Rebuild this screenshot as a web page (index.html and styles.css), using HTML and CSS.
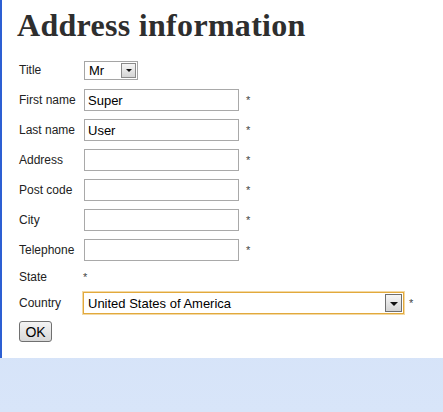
FILE: index.html
```html
<!DOCTYPE html>
<html lang="en">
<head>
    <meta charset="UTF-8">
    <meta name="viewport" content="width=device-width, initial-scale=1.0">
    <title>Address information</title>
    <link rel="stylesheet" href="styles.css">
</head>
<body>
    <div class="panel">
        <h1>Address information</h1>
        <form class="address-form">
            <div class="row">
                <label>Title</label>
                <div class="select small">
                    <span>Mr</span>
                    <span class="arrow"></span>
                </div>
            </div>
            <div class="row">
                <label>First name</label>
                <input type="text" value="Super">
                <span class="req">*</span>
            </div>
            <div class="row">
                <label>Last name</label>
                <input type="text" value="User">
                <span class="req">*</span>
            </div>
            <div class="row">
                <label>Address</label>
                <input type="text">
                <span class="req">*</span>
            </div>
            <div class="row">
                <label>Post code</label>
                <input type="text">
                <span class="req">*</span>
            </div>
            <div class="row">
                <label>City</label>
                <input type="text">
                <span class="req">*</span>
            </div>
            <div class="row">
                <label>Telephone</label>
                <input type="text">
                <span class="req">*</span>
            </div>
            <div class="row row-state">
                <label>State</label>
                <span class="req">*</span>
            </div>
            <div class="row row-country">
                <label>Country</label>
                <div class="select wide focused">
                    <span>United States of America</span>
                    <span class="arrow"></span>
                </div>
                <span class="req">*</span>
            </div>
            <button class="btn" type="button">OK</button>
        </form>
    </div>
</body>
</html>
```

FILE: styles.css
```css
html, body {
    margin: 0;
    padding: 0;
}
body {
    background: linear-gradient(to bottom, #cddcf5 0px, #d8e5f9 412px);
    background-attachment: fixed;
    font-family: "Liberation Sans", Arial, sans-serif;
    color: #222;
}
.panel {
    background: white;
    border-left: 2px solid #2d5fd3;
    height: 358px;
    box-sizing: border-box;
    padding: 7px 0 0 15px;
}
h1 {
    font-family: "Liberation Serif", "Times New Roman", serif;
    font-size: 32px;
    font-weight: bold;
    color: #2e2e2e;
    margin: 0;
    height: 48px;
    letter-spacing: 0.3px;
}
.address-form {
    padding-left: 2px;
}
.row {
    display: flex;
    align-items: center;
    height: 30px;
    font-size: 12px;
}
.row label {
    width: 65px;
    flex: none;
}
.row input {
    width: 155px;
    height: 22px;
    box-sizing: border-box;
    border: 1px solid #a9a9a9;
    padding: 2px 3px;
    font-family: "Liberation Sans", Arial, sans-serif;
    font-size: 13px;
    color: #000;
    margin: 0;
}
.req {
    margin-left: 7px;
    font-size: 11px;
    color: #444;
}
.row-state {
    height: 24px;
}
.row-state .req {
    margin-left: -1px;
}
.row-country {
    height: 28px;
}
.row-country label {
    width: 64px;
}
.row-country .req {
    margin-left: 5px;
}
.select {
    display: flex;
    align-items: center;
    justify-content: space-between;
    box-sizing: border-box;
    border: 1px solid #a5a5a5;
    background: white;
    font-size: 13px;
    color: #000;
    padding: 0 1px 0 4px;
}
.select.small {
    width: 54px;
    height: 19px;
}
.select.wide {
    width: 321px;
    height: 22px;
}
.select.focused {
    border: 1px solid #e2a93c;
    box-shadow: 0 0 0 1px #f3d9a4;
}
.arrow {
    width: 15px;
    height: 15px;
    box-sizing: border-box;
    border: 1px solid #8a8a8a;
    background: linear-gradient(#f6f6f6, #d4d4d4);
    position: relative;
}
.select.wide .arrow {
    height: 18px;
    width: 17px;
    border-color: #6f6f6f;
}
.arrow::after {
    content: "";
    position: absolute;
    left: 50%;
    top: 50%;
    margin-left: -4px;
    margin-top: -1px;
    border-left: 4px solid transparent;
    border-right: 4px solid transparent;
    border-top: 4px solid #111;
}
.select.small .arrow::after {
    margin-left: -3px;
    border-left-width: 3px;
    border-right-width: 3px;
    border-top-width: 3px;
}
.btn {
    margin-top: 4px;
    width: 33px;
    height: 21px;
    padding: 0;
    font-family: "Liberation Sans", Arial, sans-serif;
    font-size: 14px;
    color: #000;
    border: 1px solid #707070;
    border-radius: 3px;
    background: linear-gradient(#f4f4f4 0%, #e6e6e6 50%, #d8d8d8 100%);
}
```
